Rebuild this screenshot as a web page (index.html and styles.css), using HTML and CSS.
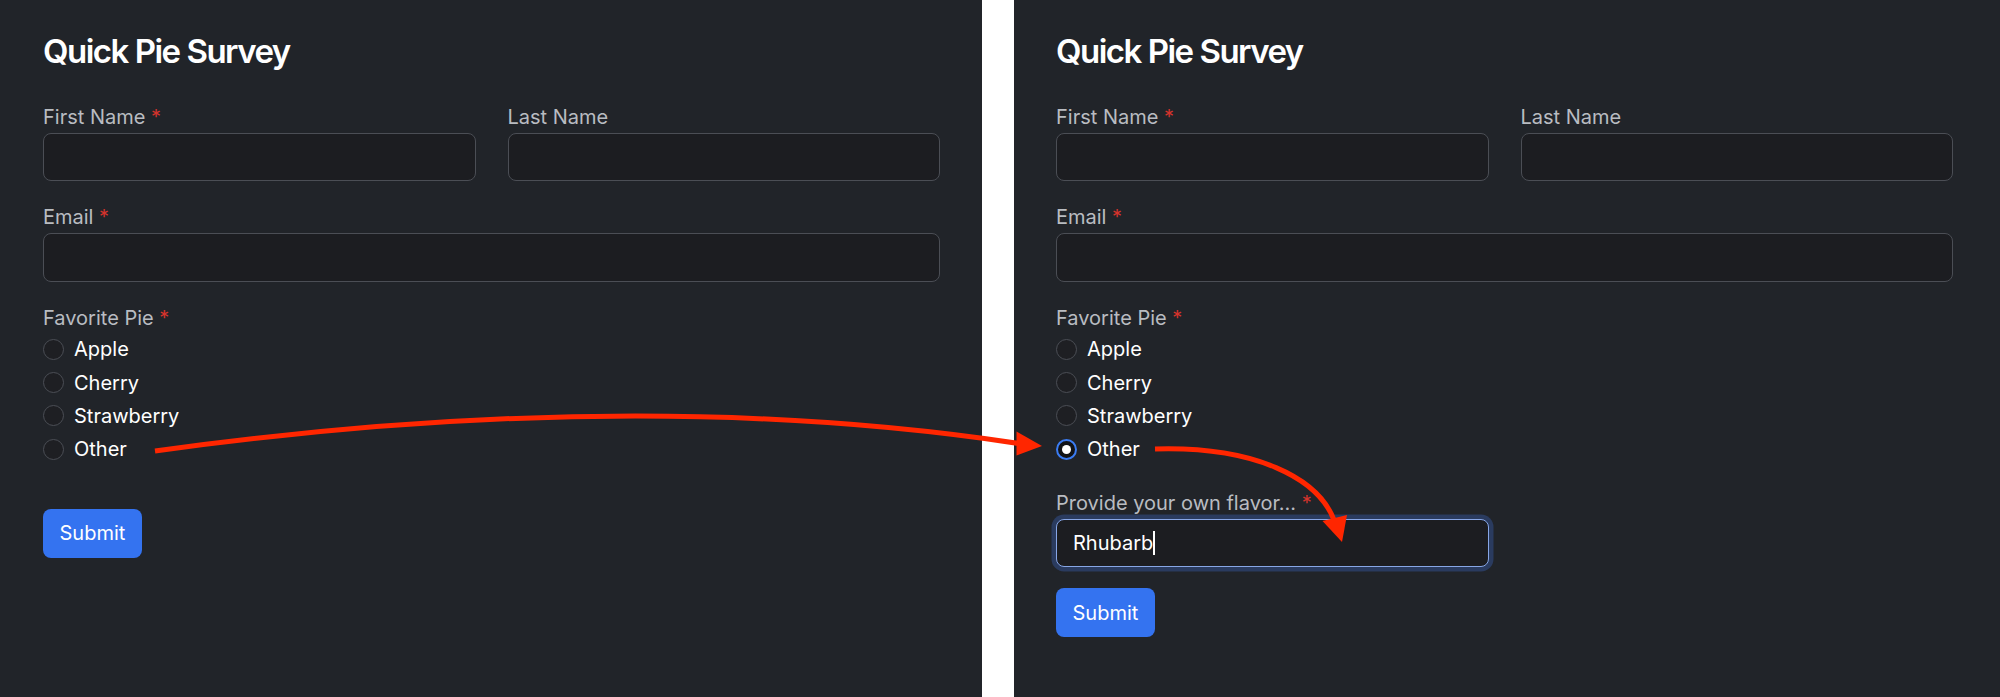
FILE: index.html
```html
<!DOCTYPE html>
<html lang="en">
<head>
<meta charset="utf-8">
<title>Quick Pie Survey</title>
<link rel="stylesheet" href="styles.css">
</head>
<body>
<div class="stage">
  <section class="panel">
    <form class="survey">
      <h2 class="title">Quick Pie Survey</h2>
      <div class="row">
        <div class="field">
          <label class="label">First Name <span class="req">*</span></label>
          <div class="input"></div>
        </div>
        <div class="field">
          <label class="label">Last Name</label>
          <div class="input"></div>
        </div>
      </div>
      <div class="field">
        <label class="label">Email <span class="req">*</span></label>
        <div class="input"></div>
      </div>
      <div class="field">
        <label class="label">Favorite Pie <span class="req">*</span></label>
        <div class="radios">
          <div class="radio"><span class="dot"></span><span class="opt">Apple</span></div>
          <div class="radio"><span class="dot"></span><span class="opt">Cherry</span></div>
          <div class="radio"><span class="dot"></span><span class="opt">Strawberry</span></div>
          <div class="radio"><span class="dot"></span><span class="opt">Other</span></div>
        </div>
      </div>
      <div class="slot"></div>
      <button type="button" class="submit">Submit</button>
    </form>
  </section>
  <div class="divider"></div>
  <section class="panel">
    <form class="survey">
      <h2 class="title">Quick Pie Survey</h2>
      <div class="row">
        <div class="field">
          <label class="label">First Name <span class="req">*</span></label>
          <div class="input"></div>
        </div>
        <div class="field">
          <label class="label">Last Name</label>
          <div class="input"></div>
        </div>
      </div>
      <div class="field">
        <label class="label">Email <span class="req">*</span></label>
        <div class="input"></div>
      </div>
      <div class="field">
        <label class="label">Favorite Pie <span class="req">*</span></label>
        <div class="radios">
          <div class="radio"><span class="dot"></span><span class="opt">Apple</span></div>
          <div class="radio"><span class="dot"></span><span class="opt">Cherry</span></div>
          <div class="radio"><span class="dot"></span><span class="opt">Strawberry</span></div>
          <div class="radio"><span class="dot checked"></span><span class="opt">Other</span></div>
        </div>
      </div>
      <div class="row">
        <div class="field">
          <label class="label">Provide your own flavor... <span class="req">*</span></label>
          <div class="input focused"><span class="value">Rhubarb</span><span class="caret"></span></div>
        </div>
        <div class="field"></div>
      </div>
      <button type="button" class="submit">Submit</button>
    </form>
  </section>
  <svg class="annotations" width="2000" height="697" viewBox="0 0 2000 697" aria-hidden="true">
    <path d="M155 451 Q632 385 1019 443.5" fill="none" stroke="#ff2600" stroke-width="5" stroke-linecap="butt"/>
    <polygon points="1042,446 1016.5,431.5 1016.5,455.5" fill="#ff2600"/>
    <path d="M1155 449 C1255 446 1318 478 1334 520" fill="none" stroke="#ff2600" stroke-width="5"/>
    <polygon points="1342,542 1322.5,521 1347,515" fill="#ff2600"/>
  </svg>
</div>
</body>
</html>
```

FILE: styles.css
```css
* { box-sizing: border-box; }

html, body {
  margin: 0;
  padding: 0;
  background: #ffffff;
}

body {
  font-family: Inter, "Liberation Sans", Arial, sans-serif;
  color: #ffffff;
}

.stage {
  position: relative;
  display: flex;
  width: 2000px;
  height: 697px;
  overflow: hidden;
}

.panel {
  background: #212429;
  height: 697px;
  padding: 31px 0 0 43px;
}

.panel:first-child { width: 982px; }
.panel:last-of-type { flex: 1; padding-left: 42px; }

.divider {
  width: 32px;
  background: #ffffff;
}

.survey {
  width: 897px;
  display: flex;
  flex-direction: column;
  align-items: flex-start;
}

.title {
  margin: 0 0 29.5px;
  font-size: 33px;
  line-height: 41px;
  font-weight: 600;
  letter-spacing: -1.5px;
  color: #ffffff;
}

.row {
  width: 100%;
  display: grid;
  grid-template-columns: 1fr 1fr;
  column-gap: 32px;
}

.field {
  width: 100%;
  margin-bottom: 21px;
}

.label {
  display: block;
  font-size: 20px;
  line-height: 31px;
  color: #b9bcc1;
}

.req { color: #d4332c; }

.input {
  height: 48.6px;
  border: 1px solid #4b4e55;
  border-radius: 8px;
  background: #1c1d21;
  display: flex;
  align-items: center;
  padding: 0 16px;
}

.input.focused {
  border-color: #87a6e6;
  box-shadow: 0 0 0 4.5px #2a3b5f;
}

.value {
  font-size: 20px;
  color: #ffffff;
}

.caret {
  width: 1.5px;
  height: 24px;
  background: #ffffff;
}

.radios {
  display: flex;
  flex-direction: column;
  margin-top: -1px;
  margin-bottom: 1px;
}

.radio {
  height: 33.3px;
  display: flex;
  align-items: center;
  gap: 10px;
}

.dot {
  width: 21px;
  height: 21px;
  border-radius: 50%;
  border: 1px solid #4b4e55;
  background: #1e1f23;
  display: flex;
  align-items: center;
  justify-content: center;
}

.dot.checked {
  border: 2px solid #3b7cf2;
  background: #121316;
}

.dot.checked::after {
  content: "";
  width: 9px;
  height: 9px;
  border-radius: 50%;
  background: #ffffff;
}

.opt {
  font-size: 20px;
  color: #ffffff;
}

.slot {
  height: 0;
  margin-bottom: 21px;
}

.submit {
  height: 49px;
  padding: 0 16.5px;
  border: none;
  border-radius: 8px;
  background: #3473f0;
  color: #ffffff;
  font-family: inherit;
  font-size: 20px;
}

.annotations {
  position: absolute;
  left: 0;
  top: 0;
  pointer-events: none;
}
```
